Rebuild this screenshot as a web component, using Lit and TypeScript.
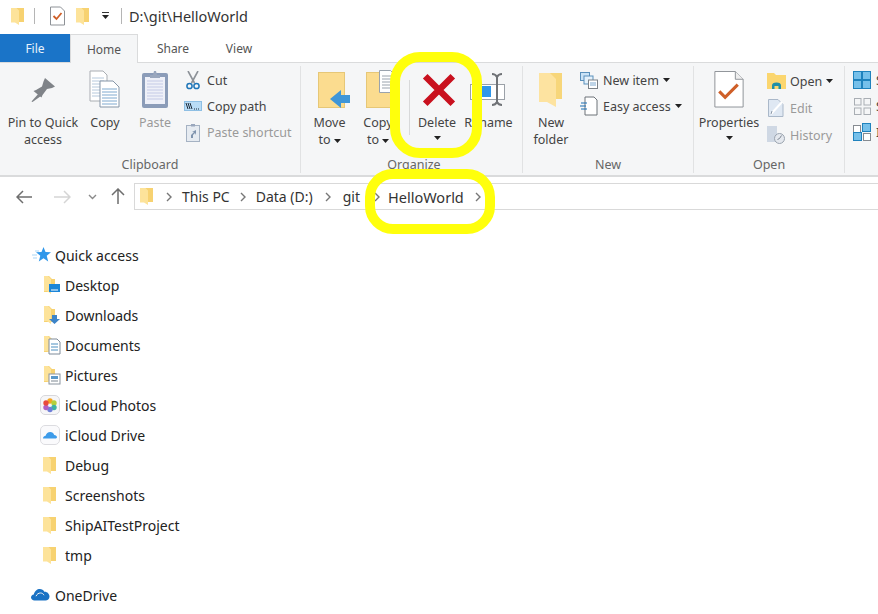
import { LitElement, html, css, svg } from 'lit';
import { customElement } from 'lit/decorators.js';

const folder = () => html`<svg width="13" height="17" viewBox="0 0 13 17">
  <path d="M5 0h8v14H7z" fill="#f7d271"/>
  <path d="M0 0h5.500L8 2.500V17L4 14.500H0z" fill="#fde39a"/>
</svg>`;

const overlayFolder = (overlay: unknown) => html`<svg width="18" height="20" viewBox="0 0 18 20">
  <path d="M1 1h5l3 3h3v13H1z" fill="#f7d271"/><path d="M1 1h4l3 3v15l-4-3H1z" fill="#fde39a"/>${overlay}
</svg>`;

const icons = {
  pin: html`<svg width="28" height="31" viewBox="0 0 28 31"><path d="M16 1l10 8.500-3 1.500-5 1-4.500 6-1 2.500-8-6.500 2.500-1 6-3.500 1.500-5z" fill="#7f8388"/><path d="M10 16l-7.500 8.500 1 .6L12 19z" fill="#7f8388"/></svg>`,
  copy: html`<svg width="32" height="38" viewBox="0 0 32 38">
    <path d="M1 1h13l4 4v26H1z" fill="#fff" stroke="#a9adb2"/>
    <path d="M3 8h12M3 11h12M3 14h12M3 17h12M3 20h12M3 23h12M3 26h12" stroke="#b6c9dc"/>
    <path d="M11 11h13l6 6v20H11z" fill="#fff" stroke="#8595a7"/>
    <path d="M13 19h15M13 22h15M13 25h15M13 28h15M13 31h15M13 34h15" stroke="#7fa9cf"/>
  </svg>`,
  paste: html`<svg width="28" height="38" viewBox="0 0 28 38">
    <rect x="1" y="3" width="26" height="35" rx="2" fill="#8b9cb8"/>
    <rect x="4" y="7" width="20" height="27" fill="#eef0f8"/>
    <path d="M6 11h16M6 14h16M6 17h16M6 20h16M6 23h16M6 26h16M6 29h16" stroke="#c4cae6"/>
    <path d="M9 5h3l1-4h2l1 4h3v3H9z" fill="#9aa7bd"/>
  </svg>`,
  cut: html`<svg width="14" height="19" viewBox="0 0 14 19">
    <path d="M2 0l6.500 12M12 0L5.500 12" stroke="#8d9298" stroke-width="1.600" fill="none"/>
    <circle cx="3.500" cy="15" r="2.600" fill="none" stroke="#1f76b8" stroke-width="1.500"/>
    <circle cx="10.500" cy="15" r="2.600" fill="none" stroke="#1f76b8" stroke-width="1.500"/>
  </svg>`,
  copyPath: html`<svg width="18" height="10" viewBox="0 0 18 10">
    <rect x=".5" y=".5" width="17" height="9" fill="#b9dcf6" stroke="#8ebfe4"/>
    <path d="M2 2l2 6M4 2l2 6M6 2l2 6" stroke="#1d2b3a" stroke-width="1"/><path d="M10 8h1M12 8h1M14 8h1" stroke="#1d2b3a"/>
  </svg>`,
  pasteShortcut: html`<svg width="14" height="19" viewBox="0 0 14 19">
    <rect x=".5" y="2.500" width="13" height="16" fill="#e6ebf1" stroke="#a5b2c3"/>
    <path d="M5 3.500V1h4v2.500z" fill="#9aa7bd"/>
    <path d="M5 15v-3l3-3H6l4-2v5l-1-2-2 2v3z" fill="#7f93ad"/>
  </svg>`,
  moveTo: html`<svg class="shift" width="34" height="38" viewBox="0 0 34 38">
    <rect x=".5" y="2.500" width="26" height="35" fill="#fbdc8f" stroke="#e6c777"/>
    <path d="M12 29L23 20v5h9v8h-9v5z" fill="#3f96d8"/>
  </svg>`,
  copyTo: html`<svg class="shift" width="34" height="38" viewBox="0 0 34 38">
    <rect x=".5" y="2.500" width="26" height="35" fill="#fbdc8f" stroke="#e6c777"/>
    <path d="M13.500.5h11l4 4v18h-15z" fill="#fff" stroke="#9aa3ad"/>
    <path d="M16 6h10M16 9h10M16 12h10M16 15h10M16 18h10" stroke="#9aa3ad"/>
    <rect x="29" y="6" width="3" height="15" fill="#8b8452"/>
  </svg>`,
  del: html`<svg class="nudge" width="34" height="35" viewBox="0 0 34 35"><path d="M5.500 5.500l23 23M28.500 5.500l-23 23" stroke="#c9111f" stroke-width="6.500" stroke-linecap="square"/></svg>`,
  rename: html`<svg width="38" height="35" viewBox="0 0 38 35">
    <rect x=".5" y="11.500" width="34" height="15" fill="#fff" stroke="#9ba1a8"/>
    <rect x="10" y="13" width="11" height="11" fill="#2f97ea"/>
    <path d="M22 1c3 0 4 1 5 3 1-2 2-3 5-3M22 32c3 0 4-1 5-3 1 2 2 3 5 3M27 4v25" stroke="#6f7276" stroke-width="2" fill="none"/>
  </svg>`,
  newFolder: html`<svg width="26" height="36" viewBox="0 0 26 36">
    <path d="M10 1h14v26H13z" fill="#f7d67a"/><path d="M1 1h11l6 6v28l-9-5H1z" fill="#fde3a0"/>
  </svg>`,
  newItem: html`<svg width="18" height="17" viewBox="0 0 18 17">
    <rect x=".5" y=".5" width="9" height="8" fill="#cbe3f6" stroke="#5b90bb"/>
    <rect x="4" y="4" width="9" height="8" fill="#e4f1fb" stroke="#5b90bb"/>
    <rect x="8.500" y="8" width="9" height="8.500" fill="#fff" stroke="#7c8288"/>
    <path d="M10 11h6M10 13h6" stroke="#7fa9cf"/>
  </svg>`,
  easyAccess: html`<svg width="18" height="20" viewBox="0 0 18 20">
    <path d="M5 1h9l3 3v15H5z" fill="#fff" stroke="#6d7278"/>
    <path d="M1 7h6M0 10h6M1 13h6" stroke="#1b6fb3" stroke-width="1.200"/>
  </svg>`,
  properties: html`<svg width="30" height="37" viewBox="0 0 30 38">
    <path d="M.5.500h21l8 8v28.500H.5z" fill="#fff" stroke="#8e9297"/><path d="M21.500.5v8h8" fill="#eee" stroke="#8e9297"/>
    <path d="M5 21l6 6 13-13" fill="none" stroke="#cf5f28" stroke-width="3.200"/>
  </svg>`,
  open: html`<svg width="19" height="16" viewBox="0 0 19 16">
    <path d="M0 0h7l2 2h10v14H0z" fill="#fbd66f"/><path d="M5 16v-3.500c0-2 1.500-3 4.500-3s4.500 1 4.500 3V16h-2.500v-3h-4v3z" fill="#1f8fa8"/>
  </svg>`,
  edit: html`<svg width="16" height="18" viewBox="0 0 16 18">
    <path d="M.5.500H10l5 5v12H.5z" fill="#dfe8f3" stroke="#aab8c9"/><path d="M3 15L14 3" stroke="#fff" stroke-width="2"/><path d="M3 15l1-3" stroke="#8a97a8"/>
  </svg>`,
  history: html`<svg width="18" height="18" viewBox="0 0 18 18">
    <path d="M0 0h10v16H0z" fill="#cfd8e4"/><circle cx="12.500" cy="12.500" r="5" fill="#e4e8ee" stroke="#9aa3af"/><path d="M12.500 12.500l2-3M12.500 12.500l-2 1" stroke="#7c8591"/>
  </svg>`,
  selectAll: html`<svg width="18" height="18" viewBox="0 0 18 18">
    <rect x=".5" y=".5" width="8" height="8" fill="#76c0ea" stroke="#1f82bd"/><rect x="9.500" y=".5" width="8" height="8" fill="#76c0ea" stroke="#1f82bd"/>
    <rect x=".5" y="9.500" width="8" height="8" fill="#76c0ea" stroke="#1f82bd"/><rect x="9.500" y="9.500" width="8" height="8" fill="#76c0ea" stroke="#1f82bd"/>
  </svg>`,
  selectNone: html`<svg width="17" height="17" viewBox="0 0 17 17" fill="none" stroke="#a9aeb4">
    <rect x=".5" y=".5" width="6.500" height="6.500"/><rect x="10" y=".5" width="6.500" height="6.500"/>
    <rect x=".5" y="10" width="6.500" height="6.500"/><rect x="10" y="10" width="6.500" height="6.500"/>
  </svg>`,
  invert: html`<svg width="18" height="18" viewBox="0 0 18 18">
    <rect x=".5" y="2.500" width="7" height="7" fill="#fff" stroke="#868b91"/><rect x="9.500" y=".5" width="8" height="8" fill="#76c0ea" stroke="#1f82bd"/>
    <rect x=".5" y="9.500" width="8" height="8" fill="#76c0ea" stroke="#1f82bd"/><rect x="10.500" y="10.500" width="7" height="7" fill="#fff" stroke="#868b91"/>
  </svg>`,
  star: html`<svg width="19" height="18" viewBox="0 0 19 18">
    <path d="M11.500 1l2 5 5.500.3-4.300 3.500 1.500 5.700-4.700-3.200-4.700 3.200 1.500-5.700L4 6.300l5.500-.3z" fill="#2f97ea"/>
    <path d="M0 9h5M1 12h4M3 5h4" stroke="#a9d5f5"/>
  </svg>`,
  photos: html`<svg width="20" height="20" viewBox="0 0 20 20">
    <rect x=".5" y=".5" width="19" height="19" rx="4.500" fill="#f6f6f8" stroke="#d8d8dc"/>
    <circle cx="10" cy="6" r="2.700" fill="#f5a623"/><circle cx="14" cy="8" r="2.700" fill="#b5cf3a"/><circle cx="14" cy="12.500" r="2.700" fill="#3fb3a2"/>
    <circle cx="10" cy="14.500" r="2.700" fill="#6f7ed8"/><circle cx="6" cy="12.500" r="2.700" fill="#b05fc4"/><circle cx="6" cy="8" r="2.700" fill="#e8493d"/>
  </svg>`,
  drive: html`<svg width="20" height="20" viewBox="0 0 20 20">
    <rect x=".5" y=".5" width="19" height="19" rx="4.500" fill="#fafafc" stroke="#dcdce0"/>
    <path d="M3 13.500c0-2 1.500-2.800 2.600-2.800C6.200 8.500 8 7 10.200 7c2 0 3.500 1.300 4 3 1.500 0 2.800 1.300 2.800 2 0 1-1 1.500-2 1.500z" fill="#3d9be9"/>
  </svg>`,
  oneDrive: html`<svg width="19" height="14" viewBox="0 0 19 14">
    <path d="M3.500 12.500C1.500 12.500 0 11 0 9.500c0-1.500 1.200-2.800 2.800-3C3.500 3 6.300 1 8.800 1c2 0 3.700 1 4.500 2.700 2.800-.3 5.200 2 5.200 4.800 0 2.500-2 4-4 4z" fill="#1a72c4"/>
    <path d="M5 8.200C6 6 7.500 5 9.500 5c1.500 0 2.800.8 3.500 2.200" fill="none" stroke="#f5f5f5" stroke-width="1"/>
  </svg>`,
  caret: html`<svg width="7" height="4" viewBox="0 0 7 4"><path d="M0 0h7L3.500 4z" fill="#222"/></svg>`,
};

@customElement('app-root')
export class AppRoot extends LitElement {
  static styles = css`
    :host {
      display: block;
      position: relative;
      width: 878px;
      height: 614px;
      overflow: hidden;
      background: #fff;
      font-family: 'Noto Sans', 'Open Sans', sans-serif;
      font-size: 13px;
      color: #444;
    }
    svg { display: block; flex: none; }

    .title {
      display: flex;
      align-items: center;
      height: 34px;
      box-sizing: border-box;
      padding: 0 0 2px 11px;
      font-size: 14.500px;
      color: #333;
    }
    .title .sep { width: 1px; height: 16px; background: #b5b5b5; }
    .title .sep.first { margin: 0 15px 0 10px; }
    .title .sep.second { margin-left: 11px; }
    .title .doc { margin-right: 11px; }
    .title .more { margin-left: 12px; }
    .title .path { margin-left: 7px; }

    .tabs { display: flex; height: 28px; }
    .tab { display: flex; align-items: center; justify-content: center; font-size: 12px; color: #555; }
    .tab.file { width: 70px; background: #1a74c8; color: #e8f2fb; }
    .tab.home {
      width: 68px;
      height: 29px;
      box-sizing: border-box;
      background: #f5f6f7;
      border: 1px solid #dadbdc;
      border-bottom: none;
      position: relative;
      z-index: 1;
    }
    .tab.share { width: 70px; }
    .tab.view { width: 62px; }

    .ribbon {
      display: flex;
      height: 115px;
      box-sizing: border-box;
      background: #f5f6f7;
      border-top: 1px solid #dadbdc;
      border-bottom: 2px solid #dadbdc;
    }
    .group {
      display: flex;
      flex-direction: column;
      flex: none;
      box-sizing: border-box;
      border-right: 1px solid #e1e2e3;
      margin: 3px 0 2px;
    }
    .group.clipboard { width: 301px; }
    .group.organize { width: 222px; padding-left: 5px; }
    .group.fresh { width: 171px; }
    .group.opening { width: 151px; }
    .group.select { width: 33px; border-right: none; padding-left: 7px; }
    .group .body { display: flex; flex: 1; min-height: 0; }
    .group .name { text-align: center; font-size: 12.500px; line-height: 16px; color: #666; }

    .big { display: flex; flex-direction: column; align-items: center; flex: none; text-align: center; line-height: 17px; font-size: 12.500px; }
    .big .ico { height: 42px; margin-bottom: 6px; display: flex; align-items: flex-end; justify-content: center; }
    .big .caret { display: flex; justify-content: center; padding-top: 5px; }
    .big .shift { margin-left: 10px; }
    .big .nudge { margin-left: 3px; }
    .big .inline { display: inline-block; vertical-align: middle; margin-left: 3px; }
    .muted { color: #9a9a9a; }

    .small { display: flex; flex-direction: column; flex: none; padding-top: 4px; gap: 6px; font-size: 12.500px; }
    .small .row { display: flex; align-items: center; gap: 4px; height: 20px; white-space: nowrap; }
    .small .ic { width: 20px; display: flex; justify-content: center; flex: none; }
    .small.clip { margin-left: -3px; }
    .small.wide { gap: 7px; padding-top: 5px; margin-left: 2px; }

    .divider { width: 1px; height: 55px; background: #d8d9da; margin: 14px 0 0 6px; flex: none; }

    .address { display: flex; align-items: center; height: 33px; box-sizing: border-box; padding-top: 6px; }
    .nav { display: flex; align-items: center; width: 134px; flex: none; }
    .nav .back { margin-left: 16px; }
    .nav .forward { margin-left: 21px; }
    .nav .recent { margin-left: 17px; }
    .nav .up { margin-left: 14px; }
    .crumbs {
      display: flex;
      align-items: center;
      flex: 1;
      height: 27px;
      box-sizing: border-box;
      border: 1px solid #d9d9d9;
      border-right: none;
      font-size: 14px;
      color: #333;
      padding-left: 5px;
      white-space: nowrap;
    }
    .crumbs .chev { margin: 0 12px; }
    .crumbs .chev.start { margin: 0 10px 0 13px; }
    .crumbs .chev.before { margin: 0 10px; }
    .crumbs .chev.git { margin: 0 6px 0 14px; }
    .crumbs .chev.end { margin: 0 0 0 11px; }
    .crumbs .current { font-size: 14.500px; margin-left: 2px; }

    .tree { display: flex; flex-direction: column; padding-top: 30px; font-size: 14px; color: #222; }
    .item { display: flex; align-items: center; height: 30px; padding-left: 43px; gap: 4px; }
    .item .ic { width: 18px; display: flex; flex: none; }
    .item.app { padding-left: 40px; gap: 5px; }
    .item.app .ic { width: 20px; }
    .item.root { padding-left: 32px; }
    .item.root .ic { width: 19px; }
    .item.last { margin-top: 10px; padding-left: 31px; gap: 5px; }

    .mark {
      position: absolute;
      box-sizing: border-box;
      border: 10px solid #ffff0c;
      pointer-events: none;
    }
    .mark.delete { left: 390px; top: 52px; width: 92px; height: 106px; border-radius: 30px; }
    .mark.crumb { left: 365px; top: 169px; width: 130px; height: 65px; border-radius: 28px; }
  `;

  private big(icon: unknown, label: unknown, width: number, caret = false, muted = false) {
    return html`<div class="big ${muted ? 'muted' : ''}" style="width:${width}px">
      <div class="ico">${icon}</div>
      <div>${label}</div>
      ${caret ? html`<div class="caret">${icons.caret}</div>` : ''}
    </div>`;
  }

  private row(icon: unknown, label: string, caret = false, muted = false) {
    return html`<div class="row ${muted ? 'muted' : ''}">
      <span class="ic">${icon}</span>${label}${caret ? icons.caret : ''}
    </div>`;
  }

  private item(icon: unknown, label: string, cls = '') {
    return html`<div class="item ${cls}"><span class="ic">${icon}</span>${label}</div>`;
  }

  private chevron(cls = '') {
    return html`<span class="chev ${cls}"><svg width="6" height="10" viewBox="0 0 6 10"><path d="M1 1l4 4-4 4" fill="none" stroke="#777" stroke-width="1.400"/></svg></span>`;
  }

  render() {
    const desktop = overlayFolder(svg`<rect x="6" y="9" width="11" height="8" fill="#1c86d8"/><path d="M8 15h7" stroke="#fff"/>`);
    const downloads = overlayFolder(svg`<path d="M9 10h5v4h3l-5.500 5L6 14h3z" fill="#3d84c8"/>`);
    const documents = overlayFolder(svg`<path d="M6 4h8l3 3v12H6z" fill="#fff" stroke="#7f8b99"/><path d="M8 9h7M8 12h7M8 15h7" stroke="#4d8fc0"/>`);
    const pictures = overlayFolder(svg`<rect x="6" y="9" width="11" height="10" fill="#fff" stroke="#8a949f"/><rect x="8" y="11" width="7" height="3" fill="#5a98c9"/><path d="M8 16h7" stroke="#7c8791"/>`);
    const toCaret = html`to<span class="inline">${icons.caret}</span>`;

    return html`
      <div class="title">
        ${folder()}
        <span class="sep first"></span>
        <svg class="doc" width="15" height="20" viewBox="0 0 15 20"><path d="M.5 1h10l4 4v14H.5z" fill="#fff" stroke="#8e9297"/><path d="M3.500 10l3 3 5-6" fill="none" stroke="#cf5f28" stroke-width="1.800"/></svg>
        ${folder()}
        <svg class="more" width="9" height="8" viewBox="0 0 9 8"><path d="M1 0h7v1H1z" fill="#333"/><path d="M1 3h7L4.500 7z" fill="#222"/></svg>
        <span class="sep second"></span>
        <span class="path">D:\\git\\HelloWorld</span>
      </div>

      <div class="tabs">
        <div class="tab file">File</div>
        <div class="tab home">Home</div>
        <div class="tab share">Share</div>
        <div class="tab view">View</div>
      </div>

      <div class="ribbon">
        <div class="group clipboard">
          <div class="body">
            ${this.big(icons.pin, html`Pin to Quick<br />access`, 86)}
            ${this.big(icons.copy, 'Copy', 38)}
            ${this.big(icons.paste, 'Paste', 62, false, true)}
            <div class="small clip">
              ${this.row(icons.cut, 'Cut')}
              ${this.row(icons.copyPath, 'Copy path')}
              ${this.row(icons.pasteShortcut, 'Paste shortcut', false, true)}
            </div>
          </div>
          <div class="name">Clipboard</div>
        </div>

        <div class="group organize">
          <div class="body">
            ${this.big(icons.moveTo, html`Move<br />${toCaret}`, 47)}
            ${this.big(icons.copyTo, html`Copy<br />${toCaret}`, 50)}
            <div class="divider"></div>
            ${this.big(icons.del, 'Delete', 54, true)}
            ${this.big(icons.rename, 'Rename', 49)}
          </div>
          <div class="name">Organize</div>
        </div>

        <div class="group fresh">
          <div class="body">
            ${this.big(icons.newFolder, html`New<br />folder`, 56)}
            <div class="small">
              ${this.row(icons.newItem, 'New item', true)}
              ${this.row(icons.easyAccess, 'Easy access', true)}
            </div>
          </div>
          <div class="name">New</div>
        </div>

        <div class="group opening">
          <div class="body">
            ${this.big(icons.properties, 'Properties', 70, true)}
            <div class="small wide">
              ${this.row(icons.open, 'Open', true)}
              ${this.row(icons.edit, 'Edit', false, true)}
              ${this.row(icons.history, 'History', false, true)}
            </div>
          </div>
          <div class="name">Open</div>
        </div>

        <div class="group select">
          <div class="body">
            <div class="small">
              ${this.row(icons.selectAll, 'Select all')}
              ${this.row(icons.selectNone, 'Select none')}
              ${this.row(icons.invert, 'Invert selection')}
            </div>
          </div>
        </div>
      </div>

      <div class="address">
        <div class="nav">
          <svg class="back" width="17" height="14" viewBox="0 0 17 14"><path d="M1 7h15M7 1L1 7l6 6" fill="none" stroke="#6e6e6e" stroke-width="1.500"/></svg>
          <svg class="forward" width="17" height="14" viewBox="0 0 17 14"><path d="M0 7h15M10 1l6 6-6 6" fill="none" stroke="#d5d5d5" stroke-width="1.500"/></svg>
          <svg class="recent" width="9" height="6" viewBox="0 0 9 6"><path d="M1 1l3.500 3.500L8 1" fill="none" stroke="#8a8a8a" stroke-width="1.400"/></svg>
          <svg class="up" width="14" height="17" viewBox="0 0 14 17"><path d="M7 16V1M1 7l6-6 6 6" fill="none" stroke="#6e6e6e" stroke-width="1.500"/></svg>
        </div>
        <div class="crumbs">
          ${folder()}
          ${this.chevron('start')}
          This PC
          ${this.chevron('before')}
          Data (D:)
          ${this.chevron()}
          git
          ${this.chevron('git')}
          <span class="current">HelloWorld</span>
          ${this.chevron('end')}
        </div>
      </div>

      <div class="tree">
        ${this.item(icons.star, 'Quick access', 'root')}
        ${this.item(desktop, 'Desktop')}
        ${this.item(downloads, 'Downloads')}
        ${this.item(documents, 'Documents')}
        ${this.item(pictures, 'Pictures')}
        ${this.item(icons.photos, 'iCloud Photos', 'app')}
        ${this.item(icons.drive, 'iCloud Drive', 'app')}
        ${this.item(folder(), 'Debug')}
        ${this.item(folder(), 'Screenshots')}
        ${this.item(folder(), 'ShipAITestProject')}
        ${this.item(folder(), 'tmp')}
        ${this.item(icons.oneDrive, 'OneDrive', 'root last')}
      </div>

      <div class="mark delete"></div>
      <div class="mark crumb"></div>
    `;
  }
}
